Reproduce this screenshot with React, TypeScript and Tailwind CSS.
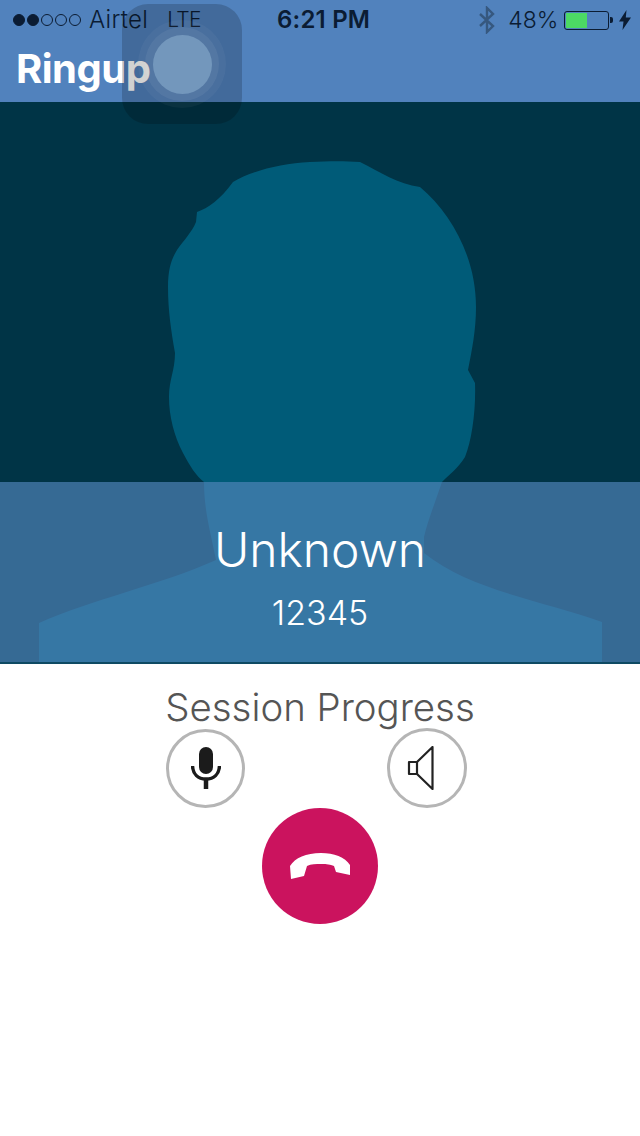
const font = { fontFamily: "Inter, 'Liberation Sans', sans-serif" };

function SignalDots() {
  return (
    <div className="flex items-center gap-[2px]">
      {[true, true, false, false, false].map((on, i) => (
        <span
          key={i}
          className={
            "h-[12px] w-[12px] rounded-full border border-[#0b1c33] " +
            (on ? "bg-[#0b1c33]" : "")
          }
        />
      ))}
    </div>
  );
}

function StatusBar() {
  return (
    <div className="relative flex h-[40px] items-center text-[#0b1c33]">
      <div className="ml-[13px]">
        <SignalDots />
      </div>
      <span className="ml-[8px] text-[24px] font-light tracking-[0.3px]">Airtel</span>
      <span className="ml-[19px] text-[21px] font-light tracking-[-0.6px]">LTE</span>
      <span className="ml-[76px] text-[24px] font-semibold tracking-[0.2px]">6:21 PM</span>
      <svg className="ml-[107px]" width="20" height="28" viewBox="0 0 20 28" fill="none" stroke="#36587f" strokeWidth="2.4">
        <path d="M3 8l13 12-6 6V2l6 6L3 20" />
      </svg>
      <span className="ml-[11px] text-[23px] font-light">48%</span>
      <div className="ml-[6px] flex h-[19px] w-[45px] rounded-[3px] border border-[#0b1c33] p-[1px]">
        <div className="h-full w-[21px] bg-[#4cd964]" />
      </div>
      <div className="ml-[1px] h-[6px] w-[3px] rounded-r-[2px] bg-[#0b1c33]" />
      <svg className="ml-[6px]" width="12" height="20" viewBox="0 0 12 20" fill="#0b1c33">
        <path d="M7.5 0L0 11.5h4.5L3.5 20 12 7.5H6.8z" />
      </svg>
    </div>
  );
}

function AssistiveTouch() {
  return (
    <div className="absolute left-[122px] top-[4px] flex h-[120px] w-[120px] items-center justify-center rounded-[26px] bg-black/[0.18]">
      <div className="flex h-[88px] w-[88px] items-center justify-center rounded-full bg-white/[0.04]">
        <div className="flex h-[74px] w-[74px] items-center justify-center rounded-full bg-white/[0.06]">
          <div className="h-[59px] w-[59px] rounded-full bg-[#7397bc]" />
        </div>
      </div>
    </div>
  );
}

function Silhouette() {
  return (
    <svg className="absolute left-0 top-0" width="640" height="560" viewBox="0 102 640 560" fill="#005b78">
      <path d="M360 162C380 172 398 184 420 187C452 214 476 258 476 307C476 330 472 350 468 370L475 383C476 410 472 440 465 457C458 468 450 474 442 482C436 500 428 520 424 537L424 553C470 590 540 600 602 622L602 662L39 662L39 623C90 600 160 585 216 560C210 530 204 510 204 482C196 476 190 466 183 453C174 436 169 416 169 397C169 380 175 370 175 353C171 330 168 310 168 287C168 268 172 258 177 250C184 240 192 232 196 222L197 212C208 208 220 200 233 182C250 172 280 163 310 162C330 161 345 161 360 162Z" />
    </svg>
  );
}

function MicButton() {
  return (
    <div className="flex h-[79px] w-[79px] items-center justify-center rounded-full border-[3px] border-[#b5b5b5]">
      <svg width="30" height="42" viewBox="0 0 30 42" fill="none" stroke="#1b1b1b">
        <rect x="8" y="0" width="14" height="27" rx="7" fill="#1b1b1b" stroke="none" />
        <path d="M1.5 19C2 27 7 32 15 32S28 27 28.5 19" strokeWidth="3.5" />
        <path d="M15 31V42" strokeWidth="4.5" />
      </svg>
    </div>
  );
}

function SpeakerButton() {
  return (
    <div className="flex h-[80px] w-[80px] items-center justify-center rounded-full border-[3px] border-[#b5b5b5]">
      <svg className="mr-[14px]" width="27" height="44" viewBox="0 0 27 44" fill="none" stroke="#222222" strokeWidth="2.2" strokeLinejoin="round">
        <path d="M25.5 1V43L10 28H2V16H10Z" />
        <path d="M10 16V28" />
      </svg>
    </div>
  );
}

function HangupButton() {
  return (
    <div className="flex h-[116px] w-[116px] items-center justify-center rounded-full bg-[#cb135e]">
      <svg width="60" height="26" viewBox="0 0 60 26" fill="#ffffff">
        <path d="M0 13C5 5 16 0 31 0C44 0 55 4 60 12L60 22L46 19L44 13C38 11 35 11 31 11C26 11 21 11 17 13L14 23L1 26Z" />
      </svg>
    </div>
  );
}

export default function App() {
  return (
    <div className="relative flex h-[1136px] w-[640px] flex-col overflow-hidden bg-white" style={font}>
      <div className="h-[102px] bg-[#5182bd]">
        <StatusBar />
        <div className="ml-[16px] mt-[4px] text-[40px] leading-[50px] font-bold tracking-[-0.5px] text-white">Ringup</div>
      </div>

      <div className="relative flex h-[560px] flex-col justify-end bg-[#003446]">
        <Silhouette />
        <div className="relative flex h-[180px] flex-col items-center bg-[#5185ba]/[0.67] pt-[38px] text-white">
          <div className="text-[48px] leading-[60px] font-light">Unknown</div>
          <div className="mt-[13px] text-[34px] leading-[40px] font-light">12345</div>
        </div>
      </div>
      <div className="h-[2px] bg-[#0f4a63]" />

      <div className="flex flex-col items-center">
        <div className="mt-[18px] text-[38.4px] leading-[50px] font-light text-[#555555]">Session Progress</div>
        <div className="-mt-[4px] mr-[7px] flex w-[301px] items-center justify-between">
          <MicButton />
          <SpeakerButton />
        </div>
        <div>
          <HangupButton />
        </div>
      </div>

      <AssistiveTouch />
    </div>
  );
}
